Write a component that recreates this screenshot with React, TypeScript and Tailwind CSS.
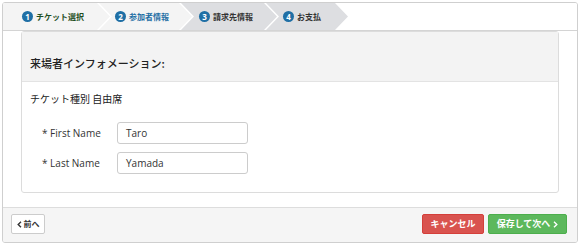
import React from "react";

const jp = "font-['Noto_Sans_CJK_JP',sans-serif]";
const lat = "font-['Open_Sans','Noto_Sans_CJK_JP',sans-serif]";

function Step({
  n,
  label,
  first,
  dark,
  textCls,
  w,
  pl,
}: {
  n: number;
  label: string;
  first?: boolean;
  dark?: boolean;
  textCls: string;
  w: string;
  pl: string;
}) {
  const clip = first
    ? "[clip-path:polygon(0_0,calc(100%-13px)_0,100%_50%,calc(100%-13px)_100%,0_100%)]"
    : "[clip-path:polygon(0_0,calc(100%-13px)_0,100%_50%,calc(100%-13px)_100%,0_100%,13px_50%)]";
  return (
    <div
      className={`${w} ${pl} ${first ? "" : "-ml-[11px]"} h-full flex items-center gap-[3px] ${clip} ${
        dark ? "bg-[#dddee1]" : "bg-[#f4f4f4]"
      }`}
    >
      <span className="w-[11px] h-[11px] rounded-full bg-[#1f6fa5] text-white text-[8px] font-bold leading-none flex items-center justify-center font-['Open_Sans',sans-serif]">
        {n}
      </span>
      <span className={`${jp} text-[8px] font-bold leading-none ${textCls}`}>{label}</span>
    </div>
  );
}

export default function App() {
  return (
    <div className="w-[580px] h-[246px] bg-white pt-[2px] pl-[2px]">
      <div className="w-[576px] h-[241px] border border-[#cfcfcf] rounded-[3px] flex flex-col overflow-hidden">
        {/* step bar */}
        <div className="h-[28px] border-b border-[#d4d4d4] flex bg-white shrink-0">
          <Step n={1} label="チケット選択" first textCls="text-[#1f4f1f]" w="w-[107px]" pl="pl-[19px]" />
          <Step n={2} label="参加者情報" textCls="text-[#1f6fa5]" w="w-[93px]" pl="pl-[16px]" />
          <Step n={3} label="請求先情報" dark textCls="text-[#333]" w="w-[96px]" pl="pl-[18px]" />
          <Step n={4} label="お支払" dark textCls="text-[#333]" w="w-[82px]" pl="pl-[17px]" />
        </div>

        {/* body */}
        <div className="flex-1 px-[18px]">
          <div className="border border-[#dcdcdc] rounded-[3px] bg-white">
            <div className="bg-[#f3f3f3] border-b border-[#e3e3e3] pt-[24px] pb-[11px] px-[8px]">
              <div className={`${jp} text-[11px] leading-[14px] font-medium text-[#222]`}>来場者インフォメーション:</div>
            </div>
            <div className="pt-[10px] pb-[18px] px-[8px]">
              <div className={`${jp} text-[10px] leading-[14px] text-[#222]`}>チケット種別 自由席</div>
              <div className="mt-[16px] flex flex-col gap-[8px] pl-[12px]">
                <div className="flex items-center">
                  <div className={`${lat} w-[75px] text-[10px] text-[#333]`}>* First Name</div>
                  <div className={`${lat} w-[131px] h-[22px] border border-[#cccccc] rounded-[3px] px-[8px] flex items-center text-[10px] text-[#333]`}>
                    Taro
                  </div>
                </div>
                <div className="flex items-center">
                  <div className={`${lat} w-[75px] text-[10px] text-[#333]`}>* Last Name</div>
                  <div className={`${lat} w-[131px] h-[22px] border border-[#cccccc] rounded-[3px] px-[8px] flex items-center text-[10px] text-[#333]`}>
                    Yamada
                  </div>
                </div>
              </div>
            </div>
          </div>
        </div>

        {/* footer */}
        <div className="h-[35px] shrink-0 border-t border-[#dddddd] bg-[#f5f5f5] pt-[6px] pl-[8px] pr-[10px] flex items-start justify-between">
          <div className={`${jp} w-[34px] h-[20px] bg-white border border-[#cccccc] rounded-[2px] flex items-center justify-center gap-[2px] text-[8px] text-[#333] font-bold`}>
            <svg width="5" height="7" viewBox="0 0 5 7">
              <path d="M4 0.8 L1.2 3.5 L4 6.2" stroke="#333" strokeWidth="1.4" fill="none" />
            </svg>
            <span>前へ</span>
          </div>
          <div className="flex gap-[4px]">
            <div className={`${jp} w-[62px] h-[20px] bg-[#d9534f] border border-[#d43f3a] rounded-[2px] flex items-center justify-center text-white text-[9px] font-bold`}>
              キャンセル
            </div>
            <div className={`${jp} w-[79px] h-[20px] bg-[#5cb85c] border border-[#4cae4c] rounded-[2px] flex items-center justify-center gap-[3px] text-white text-[9px] font-bold`}>
              <span>保存して次へ</span>
              <svg width="5" height="7" viewBox="0 0 5 7">
                <path d="M1 0.8 L3.8 3.5 L1 6.2" stroke="#fff" strokeWidth="1.4" fill="none" />
              </svg>
            </div>
          </div>
        </div>
      </div>
    </div>
  );
}
